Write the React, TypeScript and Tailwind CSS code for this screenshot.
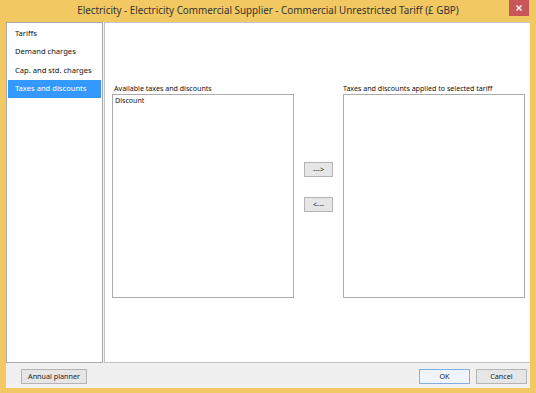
const sideItems = ["Tariffs", "Demand charges", "Cap. and std. charges", "Taxes and discounts"];

const Btn = ({ label, primary, className }: { label: string; primary?: boolean; className?: string }) => (
  <button
    className={`h-[15px] flex items-center justify-center border text-[7.2px] text-[#222] ${
      primary ? "border-[#7fb0e0] bg-[#eef4fa]" : "border-[#b4b4b4] bg-[#e6e6e6]"
    } ${className ?? ""}`}
  >
    {label}
  </button>
);

const App = () => {
  return (
    <div className="w-[536px] h-[393px] bg-[#f1c862] flex flex-col font-['Noto_Sans',sans-serif] text-[#1a1a1a]">
      {/* title bar */}
      <div className="h-[22px] grid grid-cols-[1fr_auto_1fr] items-center">
        <div />
        <div className="text-[9.85px] text-[#333] -mt-[1px]">
          Electricity - Electricity Commercial Supplier - Commercial Unrestricted Tariff (£ GBP)
        </div>
        <div className="flex justify-end self-start pr-[7px]">
          <div className="w-[20px] h-[16px] bg-[#c9575a] flex items-center justify-center">
            <svg width="6" height="6" viewBox="0 0 6 6">
              <path d="M0.5 0.5 L5.5 5.5 M5.5 0.5 L0.5 5.5" stroke="#fff" strokeWidth="1.4" />
            </svg>
          </div>
        </div>
      </div>

      {/* body */}
      <div className="mx-[6px] flex-1 bg-[#f0f0f0] flex flex-col">
        <div className="h-[341px] flex gap-px">
          {/* sidebar */}
          <div className="w-[97px] border border-[#a9a9a9] bg-white p-px">
            {sideItems.map((s, i) => (
              <div
                key={s}
                className={`h-[18.5px] flex items-center pl-[7px] text-[7.6px] ${
                  i === 3 ? "bg-[#3399ff] text-white" : "text-[#111]"
                }`}
              >
                {s}
              </div>
            ))}
          </div>

          {/* main */}
          <div className="flex-1 border border-[#c4c4c4] border-r-0 bg-white flex pl-[7px] pt-[59px]">
            <div className="w-[182px] flex flex-col">
              <div className="h-[12px] pl-[2px] text-[7.1px] leading-[12px] text-[#111]">Available taxes and discounts</div>
              <div className="h-[204px] border border-[#acacac] px-[2px] text-[7.1px] leading-[11px] text-[#111]">Discount</div>
            </div>
            <div className="w-[49px] flex flex-col items-center pt-[80px] gap-[20px]">
              <Btn label="--->" className="w-[29px]" />
              <Btn label="<---" className="w-[29px]" />
            </div>
            <div className="w-[182px] flex flex-col">
              <div className="h-[12px] text-[7.1px] leading-[12px] text-[#111]">Taxes and discounts applied to selected tariff</div>
              <div className="h-[204px] border border-[#acacac]" />
            </div>
          </div>
        </div>

        {/* footer */}
        <div className="flex-1 flex items-start pt-[6px] pl-[15px] pr-[3px]">
          <Btn label="Annual planner" className="w-[66px]" />
          <div className="flex-1" />
          <Btn label="OK" primary className="w-[51px]" />
          <Btn label="Cancel" className="w-[51px] ml-[6px]" />
        </div>
      </div>
      <div className="h-[5px]" />
    </div>
  );
};

export default App;
